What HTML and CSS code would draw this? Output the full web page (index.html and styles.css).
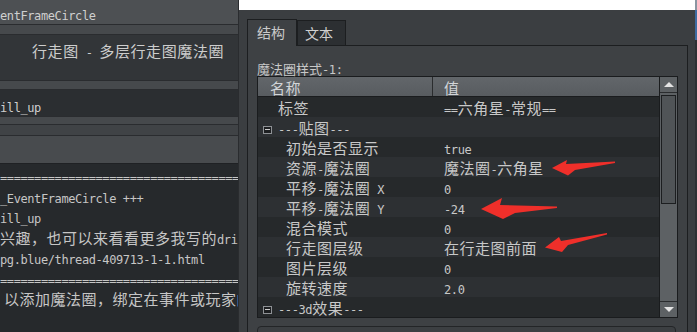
FILE: index.html
```html
<!DOCTYPE html>
<html>
<head>
<meta charset="utf-8">
<link rel="stylesheet" href="styles.css">
</head>
<body>
<div class="app">
  <div class="left">
    <div class="ltitle"><span class="m">entFrameCircle</span></div>
    <div class="lband b1"></div>
    <div class="lhead">行走图<span class="m"> - </span>多层行走图魔法圈</div>
    <div class="lband b2"></div>
    <div class="lfield"><span class="m">ill_up</span></div>
    <div class="lband b3"></div>
    <div class="lband b4"></div>
    <div class="lband b5"></div>
    <div class="ltext">
      <div class="ln"><span class="m">===================================</span></div>
      <div class="ln"><span class="m">_EventFrameCircle +++</span></div>
      <div class="ln"><span class="m">ill_up</span></div>
      <div class="ln">兴趣，也可以来看看更多我写的<span class="m">dri</span></div>
      <div class="ln"><span class="m">pg.blue/thread-409713-1-1.html</span></div>
      <div class="ln"><span class="m">===================================</span></div>
      <div class="ln ind">以添加魔法圈，绑定在事件或玩家的</div>
    </div>
  </div>
  <div class="sep"></div>
  <div class="right">
    <div class="topwhite"></div>
    <div class="tabs">
      <div class="tab active">结构</div>
      <div class="tab">文本</div>
    </div>
    <div class="pane">
      <div class="plabel">魔法圈样式<span class="m">-1:</span></div>
      <div class="table">
        <div class="tmain">
          <div class="thead"><div class="c1">名称</div><div class="c2">值</div></div>
          <div class="row"><div class="c1 l1">标签</div><div class="c2"><span class="m">==</span>六角星<span class="m">-</span>常规<span class="m">==</span></div></div>
          <div class="row"><div class="c1 grp"><span class="box"></span><span class="m">---</span>贴图<span class="m">---</span></div><div class="c2"></div></div>
          <div class="row"><div class="c1 l2">初始是否显示</div><div class="c2"><span class="m">true</span></div></div>
          <div class="row"><div class="c1 l2">资源<span class="m">-</span>魔法圈</div><div class="c2">魔法圈<span class="m">-</span>六角星</div></div>
          <div class="row"><div class="c1 l2">平移<span class="m">-</span>魔法圈<span class="m"> X</span></div><div class="c2"><span class="m">0</span></div></div>
          <div class="row"><div class="c1 l2">平移<span class="m">-</span>魔法圈<span class="m"> Y</span></div><div class="c2"><span class="m">-24</span></div></div>
          <div class="row"><div class="c1 l2">混合模式</div><div class="c2"><span class="m">0</span></div></div>
          <div class="row"><div class="c1 l2">行走图层级</div><div class="c2">在行走图前面</div></div>
          <div class="row"><div class="c1 l2">图片层级</div><div class="c2"><span class="m">0</span></div></div>
          <div class="row"><div class="c1 l2">旋转速度</div><div class="c2"><span class="m">2.0</span></div></div>
          <div class="row"><div class="c1 grp"><span class="box"></span><span class="m">---3d</span>效果<span class="m">---</span></div><div class="c2"></div></div>
        </div>
        <div class="sbar">
          <div class="sbtn up"><span class="tri-up"></span></div>
          <div class="track"><div class="handle"></div></div>
          <div class="sbtn down"><span class="tri-down"></span></div>
        </div>
      </div>
      <div class="nextbox"></div>
    </div>
  </div>
  <div class="edge"><div class="e0"></div><div class="e1"></div><div class="e2"></div></div>
  <svg class="arrows" width="697" height="332" viewBox="0 0 697 332">
    <polygon points="552,168 567,160 566,164 615,161.5 615,163 575,170 568,175.5" fill="#ef2f2a"/>
    <polygon points="481,209 502,198 500,205 557,206.5 557,208 515,213 503,219" fill="#ef2f2a"/>
    <polygon points="545,247.5 559,237 561,241 607,233 607,234.5 568,245 562,252" fill="#ef2f2a"/>
  </svg>
</div>
</body>
</html>
```
FILE: styles.css
```css
html, body {
  margin: 0;
  padding: 0;
}
body {
  width: 697px;
  height: 332px;
  overflow: hidden;
  background: #3b3e41;
  font-family: "Noto Sans CJK SC", sans-serif;
  color: #c8c8c8;
}
.m {
  font-family: "DejaVu Sans Mono", monospace;
  font-size: 12px;
  letter-spacing: -0.4px;
}
.app {
  display: flex;
  height: 332px;
  position: relative;
}

/* left panel */
.left {
  width: 238px;
  flex: none;
  display: flex;
  flex-direction: column;
  overflow: hidden;
  white-space: nowrap;
}
.ltitle {
  flex: none;
  height: 24px;
  line-height: 26px;
  background: #4d5053;
  border-bottom: 1px solid #2a2c2f;
  color: #cfcfcf;
}
.lband {
  flex: none;
  border-bottom: 1px solid #2a2c2f;
}
.b1 { height: 9px; background: #46494c; }
.b2 { height: 8px; background: #46494c; }
.b3 { height: 7px; background: #46494c; }
.b4 { height: 10px; background: #404346; }
.b5 { height: 27px; background: #484b4e; border-bottom-color: #1f2124; }
.lhead {
  flex: none;
  height: 46px;
  box-sizing: border-box;
  padding: 1px 0 0 32px;
  line-height: 30px;
  font-size: 15px;
  letter-spacing: 0.6px;
  background: #323538;
  border-bottom: 1px solid #2a2c2f;
  color: #cdcdcd;
}
.lfield {
  flex: none;
  height: 26px;
  line-height: 30px;
  background: #2b2e31;
  border-bottom: 1px solid #2a2c2f;
  color: #cfcfcf;
}
.ltext {
  flex: 1;
  background: #26292c;
  padding-top: 2px;
  font-size: 15px;
  letter-spacing: 0.5px;
  line-height: 20.5px;
  color: #c6c6c6;
}
.ln { height: 20.5px; overflow: hidden; }
.ind { padding-left: 4px; }

.sep {
  width: 1px;
  flex: none;
  background: #2a2c2f;
}

/* right panel */
.right {
  width: 456px;
  flex: none;
  display: flex;
  flex-direction: column;
  background: #3b3e41;
  overflow: hidden;
}
.topwhite {
  flex: none;
  height: 10px;
  background: #ffffff;
}
.tabs {
  flex: none;
  display: flex;
  align-items: flex-end;
  margin: 9px 0 0 8px;
  height: 26px;
  position: relative;
  z-index: 1;
}
.tab {
  box-sizing: border-box;
  font-size: 14px;
  line-height: 25px;
  border: 1px solid #1c1e20;
  border-bottom: none;
}
.tab.active {
  width: 50px;
  height: 27px;
  margin-bottom: -1px;
  padding-left: 9px;
  background: #3e4144;
  color: #cacaca;
}
.tab:not(.active) {
  width: 49px;
  height: 25px;
  padding-left: 7px;
  background: #2c2f32;
  color: #d0d0d0;
  line-height: 24px;
}
.pane {
  flex: 1;
  min-height: 0;
  overflow: hidden;
  box-sizing: border-box;
  width: 441px;
  margin-left: 8px;
  border: 1px solid #1c1e20;
  border-bottom: none;
  background: #3e4144;
  padding: 15px 0 0 9px;
}
.plabel {
  height: 15px;
  line-height: 15px;
  font-size: 13px;
  color: #c8c8c8;
}
.plabel .m { font-size: 12px; letter-spacing: -0.4px; }
.table {
  display: flex;
  width: 421px;
  height: 242px;
  box-sizing: border-box;
  border: 1px solid #1a1c1e;
  background: #26292b;
}
.tmain {
  width: 402px;
  box-sizing: border-box;
  border-right: 1px solid #1a1c1e;
  font-size: 15px;
  letter-spacing: 0.5px;
}
.thead {
  display: flex;
  height: 20px;
  box-sizing: border-box;
  border-bottom: 1px solid #1a1c1e;
  background: linear-gradient(#62666a, #585c60);
  color: #d2d5d8;
  line-height: 21px;
}
.thead .c1 {
  width: 175px;
  box-sizing: border-box;
  border-right: 1px solid #2a2c2e;
  padding-left: 12px;
}
.thead .c2 {
  padding-left: 11px;
}
.row {
  display: flex;
  height: 20px;
  line-height: 22px;
  white-space: nowrap;
  background: #26292b;
}
.row:nth-child(odd) {
  background: #2d3033;
}
.row .c1 {
  width: 175px;
  box-sizing: border-box;
}
.row .c2 {
  padding-left: 11px;
}
.l1 { padding-left: 20px; }
.l2 { padding-left: 28px; }
.grp { padding-left: 5px; }
.box {
  display: inline-block;
  width: 9px;
  height: 8px;
  box-sizing: border-box;
  border: 1px solid #8e9195;
  background: #1d1f21;
  margin-right: 6px;
  position: relative;
  vertical-align: 0px;
}
.box::after {
  content: "";
  position: absolute;
  left: 1px;
  right: 1px;
  top: 2px;
  height: 1px;
  background: #d0d0d0;
}

/* scrollbar */
.sbar {
  width: 17px;
  display: flex;
  flex-direction: column;
  background: #5d6164;
}
.sbtn {
  height: 15px;
  display: flex;
  align-items: center;
  justify-content: center;
  background: #5d6164;
}
.sbtn.up { border-bottom: 1px solid #2a2c2e; }
.sbtn.down { border-top: 1px solid #2a2c2e; }
.tri-up {
  width: 0;
  height: 0;
  border-left: 5px solid transparent;
  border-right: 5px solid transparent;
  border-bottom: 5px solid #e4e4e4;
}
.tri-down {
  width: 0;
  height: 0;
  border-left: 5px solid transparent;
  border-right: 5px solid transparent;
  border-top: 5px solid #e4e4e4;
}
.track {
  flex: 1;
  padding: 2px 1px;
}
.handle {
  height: 109px;
  box-sizing: border-box;
  border: 1px solid #1c1e20;
  background: #505457;
}
.nextbox {
  margin-top: 8px;
  width: 419px;
  height: 20px;
  box-sizing: border-box;
  border: 1px solid #232527;
  border-radius: 4px;
  background: #3c3f42;
}

/* right edge strip */
.edge {
  width: 2px;
  flex: none;
  display: flex;
  flex-direction: column;
}
.e0 { height: 10px; background: #8a96a2; }
.e1 { height: 30px; background: #3d6aa0; }
.e2 { flex: 1; background: #2e3134; }

.arrows {
  position: absolute;
  left: 0;
  top: 0;
  pointer-events: none;
}
```
